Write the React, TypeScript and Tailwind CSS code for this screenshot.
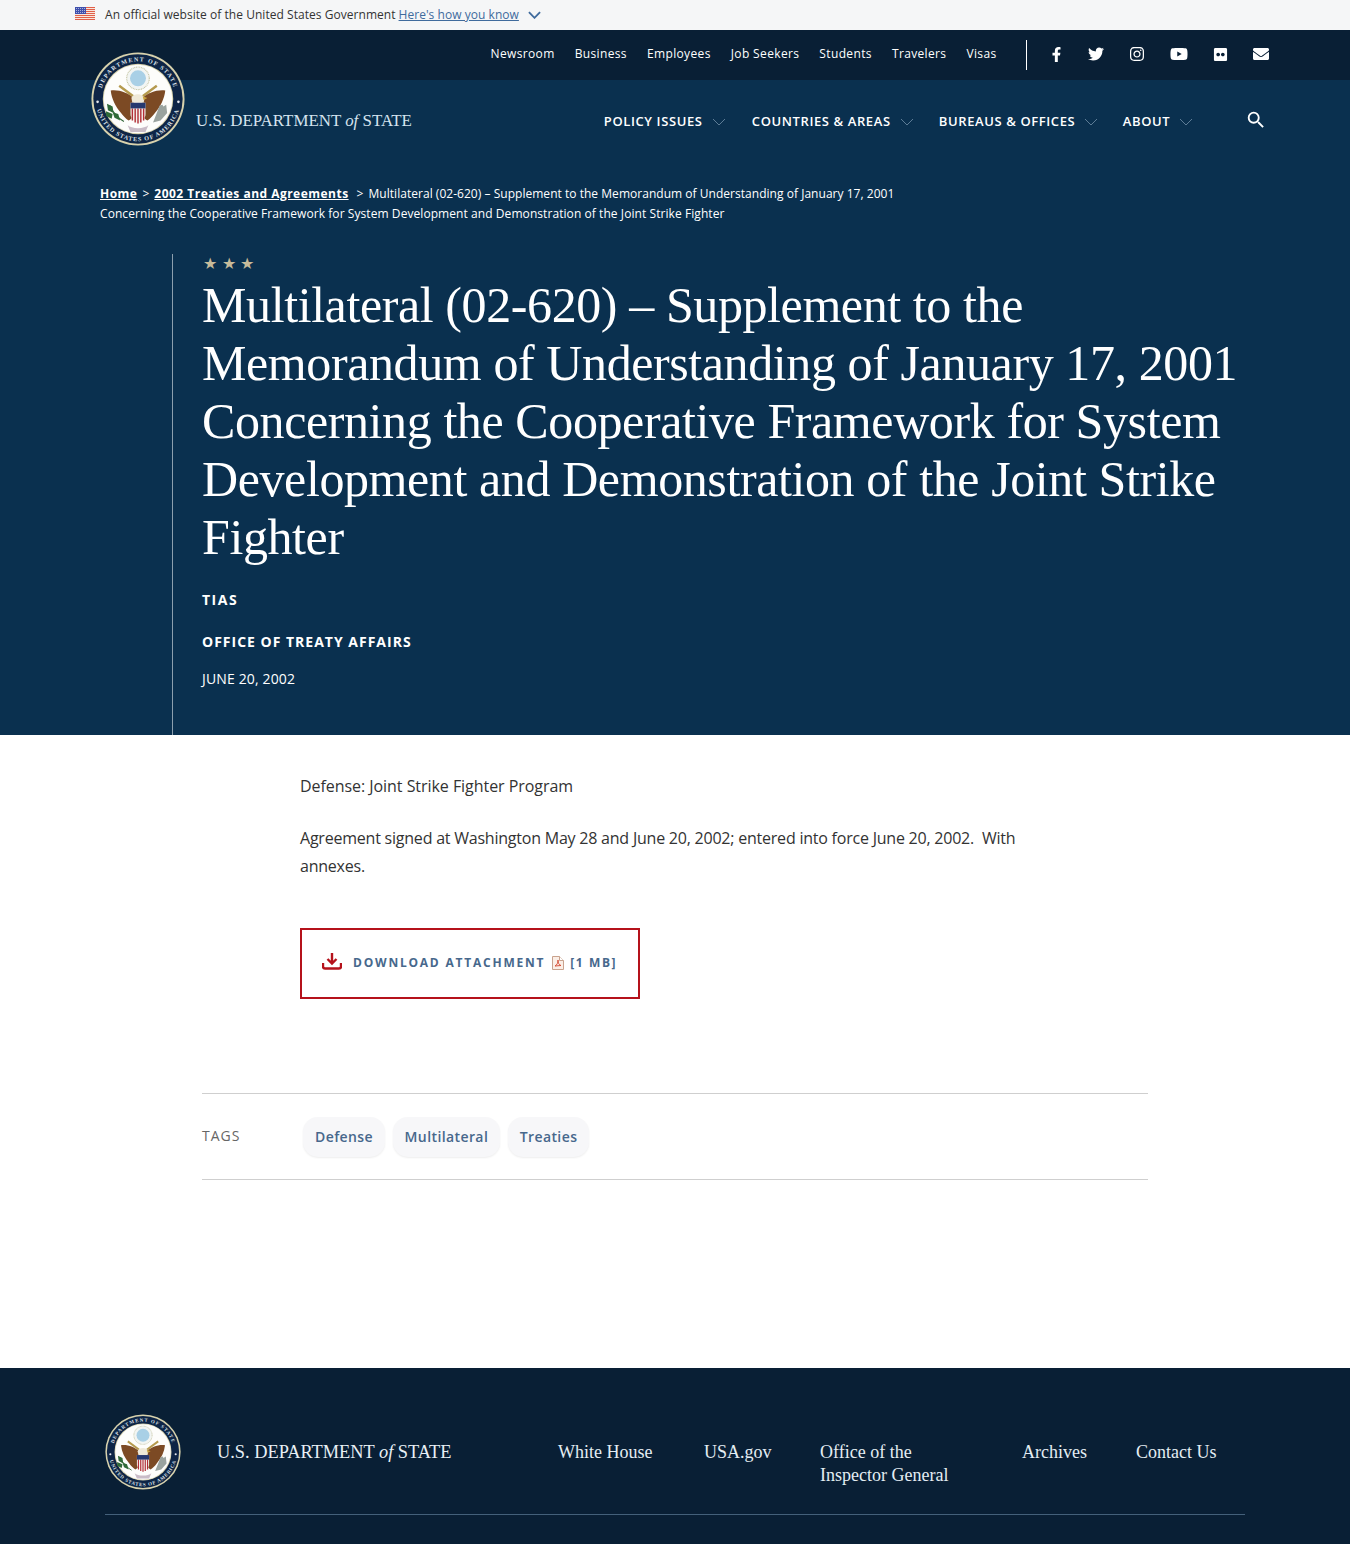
import { FaEnvelope, FaFacebookF, FaFlickr, FaInstagram, FaTwitter, FaYoutube } from "react-icons/fa";
import { MdSearch } from "react-icons/md";

const utilityLinks = ["Newsroom", "Business", "Employees", "Job Seekers", "Students", "Travelers", "Visas"];
const mainNav = [
  { label: "Policy Issues", w: "w-[148px]" },
  { label: "Countries & Areas", w: "w-[187px]" },
  { label: "Bureaus & Offices", w: "w-[184px]" },
  { label: "About", w: "w-[72px]" },
];

function Chevron({ className }: { className: string }) {
  return (
    <svg viewBox="0 0 14 8" className={className} fill="none" stroke="currentColor" strokeWidth="1">
      <path d="M1 1l6 6 6-6" />
    </svg>
  );
}

function Flag() {
  return (
    <svg viewBox="0 0 20 13" className="w-5 h-[13px] shrink-0 -mt-[3px]">
      <rect width="20" height="13" fill="#f8e6dc" />
      <path d="M0 .5h20M0 2.5h20M0 4.5h20M0 6.5h20M0 8.5h20M0 10.5h20M0 12.5h20" stroke="#e0604a" strokeWidth="1" />
      <rect width="11" height="7" fill="#3f50ad" />
      <path d="M1 1.500h9M1 3.500h9M1 5.500h9" stroke="#d5daf0" strokeWidth=".7" strokeDasharray="1 1" />
    </svg>
  );
}

function Seal({ id, className }: { id: string; className: string }) {
  return (
    <svg viewBox="0 0 100 100" className={className}>
      <circle cx="50" cy="50" r="49.5" fill="#d8d2ad" />
      <circle cx="50" cy="50" r="47.5" fill="#0e2546" />
      <circle cx="50" cy="50" r="37.5" fill="#d8d2ad" />
      <circle cx="50" cy="50" r="36.5" fill="#fdfdfb" />
      <path id={`${id}-top`} d="M10 50a40 40 0 0 1 80 0" fill="none" />
      <path id={`${id}-bot`} d="M5 50a45 45 0 0 0 90 0" fill="none" />
      <text fontSize="6.500" fontWeight="700" fill="#dfe3ea" fontFamily="Liberation Serif, serif" letterSpacing="1.300">
        <textPath href={`#${id}-top`} startOffset="50%" textAnchor="middle">DEPARTMENT OF STATE</textPath>
      </text>
      <text fontSize="6.500" fontWeight="700" fill="#dfe3ea" fontFamily="Liberation Serif, serif" letterSpacing="1">
        <textPath href={`#${id}-bot`} startOffset="50%" textAnchor="middle">UNITED STATES OF AMERICA</textPath>
      </text>
      <circle cx="7" cy="53" r="1.400" fill="#e6e8ee" />
      <circle cx="93" cy="53" r="1.400" fill="#e6e8ee" />
      {/* glory */}
      <circle cx="50" cy="28" r="12" fill="#f2f5f3" stroke="#c4c4a2" strokeWidth="1.200" strokeDasharray="1 .8" />
      <circle cx="50" cy="28" r="8.500" fill="#a9d0e6" />
      {/* arrows and branch bars */}
      <path d="M30 36l15 11M70 36l-15 11" stroke="#b59a4e" strokeWidth="2.600" />
      {/* wings */}
      <path d="M21 41c9-1 18 2 25 9l-1 17c-1 3-3 5-5 6-3-2-6-5-8-8-6-7-10-15-11-24z" fill="#7c4a24" />
      <path d="M79 41c-9-1-18 2-25 9l1 17c1 3 3 5 5 6 3-2 6-5 8-8 6-7 10-15 11-24z" fill="#7c4a24" />
      {/* head */}
      <path d="M43 49c1-5 12-6 14 0l-1 5H44z" fill="#efe9d8" />
      <path d="M55 47l5 2-4 2z" fill="#c9a33d" />
      {/* shield */}
      <path d="M42 54h16v12c0 5-4 8-8 10-4-2-8-5-8-10z" fill="#f5f2ee" />
      <path d="M44 60v13M47 60v15M50 60v16M53 60v15M56 60v13" stroke="#b22f36" strokeWidth="1.500" />
      <rect x="42" y="54" width="16" height="6" fill="#27396f" />
      {/* olive branch */}
      <path d="M20 57c3 7 8 13 15 17" stroke="#35693a" strokeWidth="1.200" fill="none" />
      <path d="M17 55l6 3 1 7-6-3zM23 64l6 2 2 7-6-3zM16 63l7 3-1 5-6-3z" fill="#2f6a38" />
      {/* arrows */}
      <path d="M66 75l4-10 3-8 3-1 1 2 3-2 1 9-7 8z" fill="#9aa39f" />
      <path d="M39 78c4 4 18 4 22 0l-3 7H42z" fill="#c9bcc7" />
    </svg>
  );
}

function Logotype({ className }: { className: string }) {
  return (
    <span className={`font-['Liberation_Serif',serif] whitespace-nowrap ${className}`}>
      U.S. DEPARTMENT <i>of</i> STATE
    </span>
  );
}

export default function App() {
  return (
    <div className="relative w-[1350px] min-h-[1544px] bg-white font-['Open_Sans',sans-serif] text-[#333]">
      {/* gov banner */}
      <div className="h-[30px] bg-[#f5f6f7] pl-[75px] flex items-center text-xs tracking-[0.04px]">
        <Flag />
        <span className="ml-[10px] text-[#333]">An official website of the United States Government</span>
        <a href="#" className="ml-[3px] text-[#3f6b9d] underline">Here's how you know</a>
        <Chevron className="ml-[9px] w-[13px] h-2 text-[#3f6b9d] stroke-[2]" />
      </div>

      {/* utility bar */}
      <div className="h-[50px] bg-[#091f35] flex items-center justify-end pr-[81px] text-white">
        <div className="flex gap-[20px] text-xs tracking-[0.36px] -mt-[2px]">
          {utilityLinks.map((link) => (
            <a key={link} href="#">{link}</a>
          ))}
        </div>
        <div className="w-px h-[30px] bg-white ml-[29px] mr-[22px]" />
        <div className="flex items-center gap-[24.900px] -mt-[2px]">
          <FaFacebookF size={15} />
          <FaTwitter size={16} />
          <FaInstagram size={16} />
          <FaYoutube size={18} />
          <FaFlickr size={15} />
          <FaEnvelope size={16} />
        </div>
      </div>

      <Seal id="head" className="absolute left-[91px] top-[52px] w-[94px] h-[94px]" />

      {/* hero */}
      <div className="h-[655px] bg-[#0a304f] text-white flex flex-col">
        <div className="h-[80px] flex items-center pl-[196px] pr-[83px] pt-[3px]">
          <Logotype className="text-[16.900px] text-[#d5e3ee] -mt-[1px]" />
          <nav className="ml-[192px] flex items-center">
            {mainNav.map((item) => (
              <a key={item.label} href="#" className={`flex items-center gap-[9px] text-[13px] font-semibold uppercase tracking-[0.6px] ${item.w}`}>
                <span className="whitespace-nowrap">{item.label}</span>
                <Chevron className="w-[14px] h-2 text-[#5d7c96]" />
              </a>
            ))}
          </nav>
          <MdSearch size={22} className="ml-auto -mt-[4px]" />
        </div>

        <div className="mt-[24px] pl-[100px] text-xs leading-[20px] whitespace-nowrap tracking-[0.07px]">
          <a href="#" className="font-bold underline tracking-[0.48px]">Home</a>
          <span className="mx-[5px]">&gt;</span>
          <a href="#" className="font-bold underline tracking-[0.48px]">2002 Treaties and Agreements</a>
          <span className="ml-[8px] mr-[5px]">&gt;</span>
          <span className="tracking-[0.03px]">Multilateral (02-620) – Supplement to the Memorandum of Understanding of January 17, 2001</span>
          <br />
          <span>Concerning the Cooperative Framework for System Development and Demonstration of the Joint Strike Fighter</span>
        </div>

        <div className="mt-[30px] ml-[172px] flex-1 border-l border-[#8c9fae] pl-[29px]">
          <div className="flex gap-[4.500px] pl-[1px] text-[16px] leading-[18px] text-[#c7bb9a]">
            <span>★</span>
            <span>★</span>
            <span>★</span>
          </div>
          <h1 className="mt-[4px] font-['Liberation_Serif',serif] text-[50px] leading-[58px] font-normal whitespace-nowrap tracking-[-0.4px]">
            Multilateral (02-620) – Supplement to the
            <br />
            Memorandum of Understanding of January 17, 2001
            <br />
            Concerning the Cooperative Framework for System
            <br />
            Development and Demonstration of the Joint Strike
            <br />
            Fighter
          </h1>
          <p className="mt-[24px] text-sm leading-[20px] font-bold tracking-[1.5px]">TIAS</p>
          <p className="mt-[22px] text-sm leading-[20px] font-bold tracking-[1px]">OFFICE OF TREATY AFFAIRS</p>
          <p className="mt-[17px] text-sm leading-[20px] tracking-[0.15px]">JUNE 20, 2002</p>
        </div>
      </div>

      {/* body */}
      <div className="pl-[300px] pt-[37px] w-[1040px] text-base leading-[28px] text-[#333]">
        <p className="tracking-[-0.05px]">Defense: Joint Strike Fighter Program</p>
        <p className="mt-[24px] tracking-[-0.22px]">
          Agreement signed at Washington May 28 and June 20, 2002; entered into force June 20, 2002.&nbsp; With
          <br />
          annexes.
        </p>
      </div>

      <div className="ml-[300px] mt-[48px] w-[340px] h-[71px] border-2 border-[#b5121b] flex items-center pl-[20px] pb-[2px]">
        <svg viewBox="0 0 20 18" className="w-5 h-[18px] shrink-0 -mt-[4px] text-[#b5121b]" fill="none" stroke="currentColor" strokeWidth="2.400">
          <path d="M10 1v10M5.500 7l4.500 4.500L14.500 7" />
          <path d="M1 11v3.500c0 1 .8 2 2 2h14c1.200 0 2-1 2-2V11" />
        </svg>
        <span className="ml-[11px] text-xs font-bold tracking-[1.78px] text-[#47688c] whitespace-nowrap">DOWNLOAD ATTACHMENT</span>
        <svg viewBox="0 0 12 14" className="ml-[7px] w-3 h-[14px] shrink-0">
          <path d="M.5.500h7l4 4v9H.5z" fill="#fbeee6" stroke="#c9a28d" />
          <path d="M7.500.500v4h4" fill="#fff" stroke="#c9a28d" />
          <path d="M3 10c2-1 3-3 3-6 0 3 1 5 3 5.500-2 0-4 .5-6 .5z" fill="none" stroke="#d2452d" strokeWidth=".9" />
        </svg>
        <span className="ml-[6px] text-xs font-bold tracking-[1.6px] text-[#47688c] whitespace-nowrap">[1 MB]</span>
      </div>

      {/* tags */}
      <div className="ml-[202px] mt-[94px] w-[946px] h-[87px] border-y border-[#cfcfcf] flex items-center">
        <span className="text-sm font-medium tracking-[1px] text-[#666] w-[100px] -mt-[1px]">TAGS</span>
        <div className="flex gap-[7.500px] mt-[1px] pl-[1px]">
          {["Defense", "Multilateral", "Treaties"].map((tag) => (
            <a key={tag} href="#" className="h-10 px-[12px] flex items-center rounded-[15px] bg-[#f7f7f9] shadow-[0_1px_2px_#eeeeee] text-sm font-semibold tracking-[0.4px] text-[#47688c]">
              {tag}
            </a>
          ))}
        </div>
      </div>

      {/* footer */}
      <footer className="absolute left-0 right-0 top-[1368px] h-[176px] bg-[#091f35] px-[105px] pt-[46px] text-white">
        <div className="flex items-start h-[101px] border-b border-[#44607a] font-['Liberation_Serif',serif] text-[18px] leading-[23px] text-[#e4edf3]">
          <Seal id="foot" className="w-[76px] h-[76px] shrink-0" />
          <Logotype className="ml-[36px] mt-[27px] w-[341px] text-[18.350px] text-[#e8f0f5]" />
          <div className="mt-[27px] flex">
            <a href="#" className="w-[146px]">White House</a>
            <a href="#" className="w-[116px]">USA.gov</a>
            <a href="#" className="w-[202px]">Office of the<br />Inspector General</a>
            <a href="#" className="w-[114px]">Archives</a>
            <a href="#">Contact Us</a>
          </div>
        </div>
      </footer>
    </div>
  );
}
